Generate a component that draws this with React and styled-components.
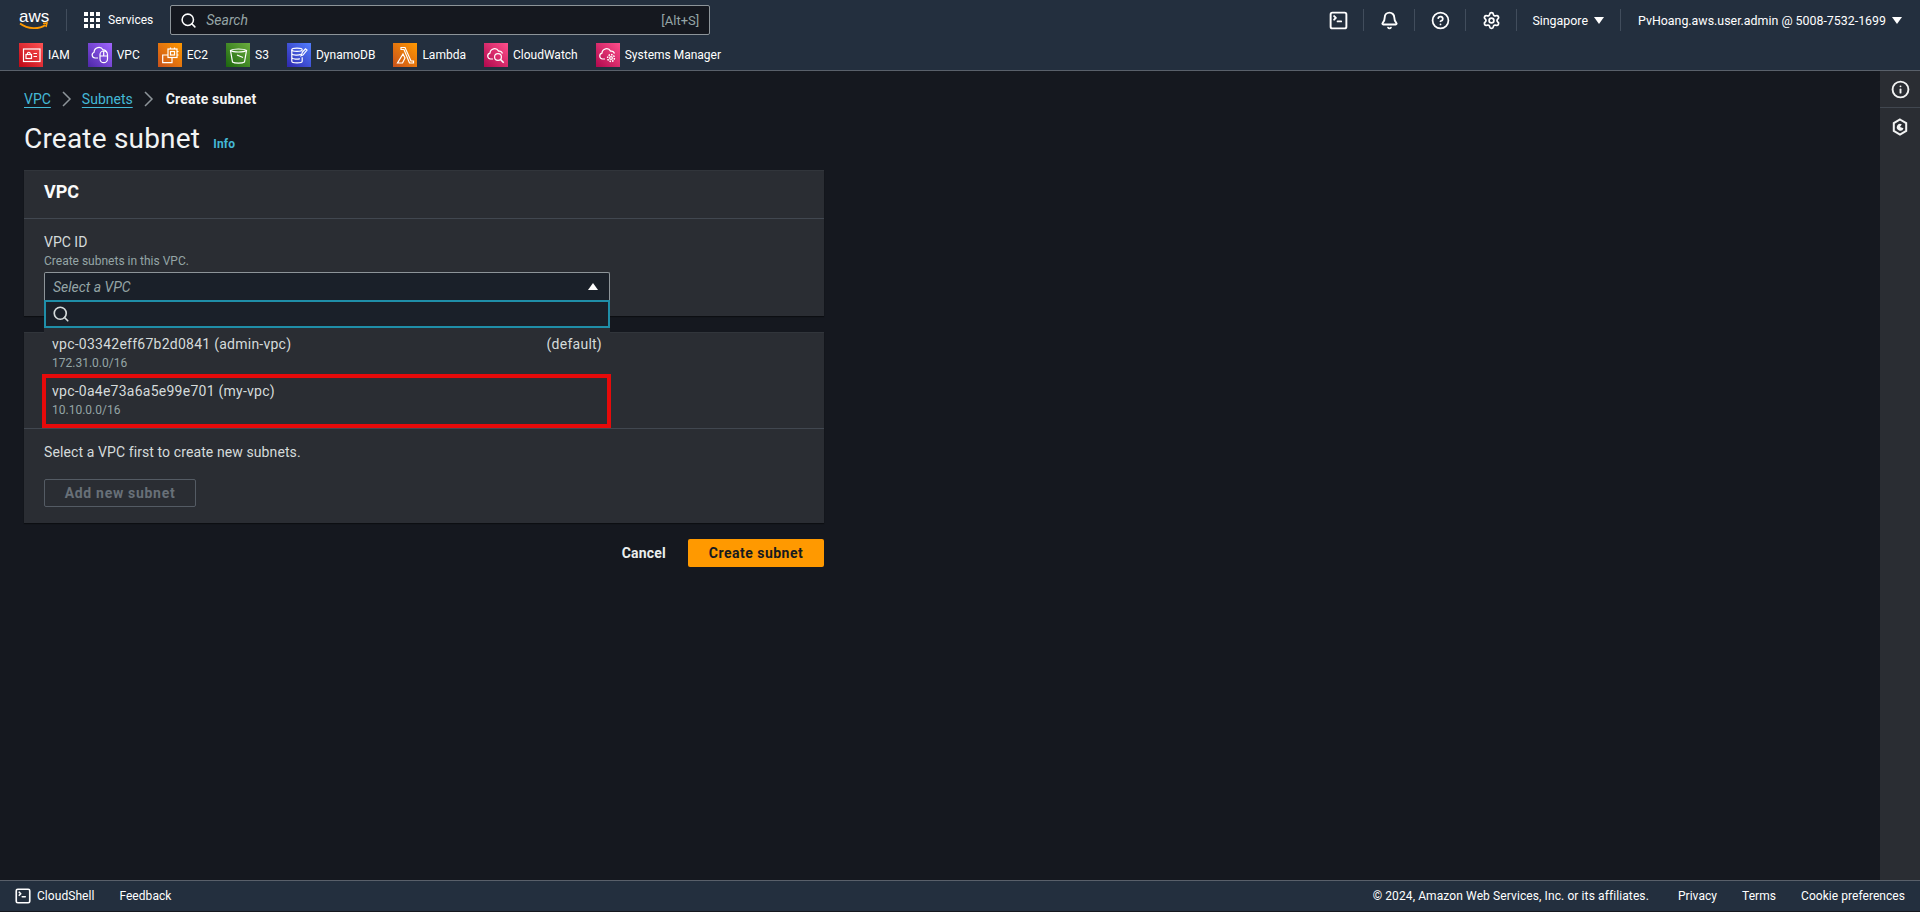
import React from 'react';
import styled, { createGlobalStyle } from 'styled-components';
import { Search, Bell, CircleHelp, Settings, SquareTerminal, Info } from 'lucide-react';

const GlobalStyle = createGlobalStyle`
  html, body {
    margin: 0;
    padding: 0;
    background: #15181f;
  }
  * {
    box-sizing: border-box;
  }
  body {
    font-family: Roboto, "Noto Sans", Arial, sans-serif;
    font-size: 14px;
    color: #d5dbdb;
  }
`;

const Page = styled.div`
  display: flex;
  flex-direction: column;
  height: 912px;
  overflow: hidden;
`;

// Top navigation
const TopNav = styled.header`
  flex: none;
  height: 71px;
  background: #232f3e;
  border-bottom: 1px solid #59606a;
  display: flex;
  flex-direction: column;
`;

const PrimaryRow = styled.div`
  height: 40px;
  display: flex;
  align-items: center;
  padding-left: 19px;
`;

const LogoWrap = styled.div`
  width: 30px;
  height: 22px;
  position: relative;
  margin-right: 17px;
  color: #fff;
  font: 400 17px/15px "Liberation Sans", Arial, sans-serif;
  text-align: center;
  svg {
    position: absolute;
    left: 0;
    bottom: 0;
  }
`;

const Divider = styled.span`
  flex: none;
  width: 1px;
  height: 22px;
  background: #414d5c;
`;

const ServicesButton = styled.div`
  display: flex;
  align-items: center;
  gap: 8px;
  margin-left: 17px;
  color: #fff;
  font-size: 12px;
`;

const SearchBox = styled.div`
  width: 540px;
  height: 30px;
  margin-left: 17px;
  padding: 0 10px 0 9px;
  background: #15181f;
  border: 1px solid #8d9499;
  border-radius: 2px;
  display: flex;
  align-items: center;
  gap: 9px;
  color: #fff;
  font-size: 14px;
`;

const SearchHint = styled.span`
  color: #95a5a6;
  font-style: italic;
  flex: 1;
`;

const ShortcutHint = styled.span`
  color: #95a5a6;
  font-size: 13px;
`;

const NavRight = styled.div`
  margin-left: auto;
  display: flex;
  align-items: center;
  color: #fff;
  font-size: 12.4px;
`;

const NavIcon = styled.div`
  width: 50px;
  height: 40px;
  display: flex;
  align-items: center;
  justify-content: center;
`;

const NavMenu = styled.div`
  display: flex;
  align-items: center;
  gap: 6px;
  padding: 0 ${(p) => p.$right}px 0 ${(p) => p.$left}px;
  white-space: nowrap;
`;

const Caret = styled.span`
  width: 0;
  height: 0;
  border-left: 5px solid transparent;
  border-right: 5px solid transparent;
  border-top: ${(p) => (p.$up ? 'none' : '7px solid #fff')};
  border-bottom: ${(p) => (p.$up ? '7px solid #fff' : 'none')};
`;

const SelectCaret = styled(Caret)`
  margin: 0 3px 2px 0;
`;

const ShortcutRow = styled.div`
  height: 30px;
  display: flex;
  align-items: flex-start;
  gap: 18px;
  padding: 3px 0 0 19px;
`;

const Shortcut = styled.div`
  display: flex;
  align-items: center;
  gap: 5px;
  color: #fff;
  font-size: 12px;
  line-height: 24px;
  white-space: nowrap;
`;

const ServiceTile = styled.span`
  flex: none;
  width: 24px;
  height: 24px;
  display: flex;
  background: linear-gradient(45deg, ${(p) => p.$from}, ${(p) => p.$to});
  svg {
    width: 24px;
    height: 24px;
    fill: none;
    stroke: #fff;
    stroke-width: 1.2;
  }
`;

// Body
const Middle = styled.div`
  flex: 1;
  display: flex;
  min-height: 0;
`;

const Main = styled.main`
  flex: 1;
  padding: 17px 0 0 24px;
`;

const Breadcrumbs = styled.nav`
  height: 22px;
  display: flex;
  align-items: center;
  gap: 5px;
`;

const CrumbLink = styled.a`
  color: #44b9d6;
  text-decoration: underline;
  text-underline-offset: 3px;
  font-size: 14px;
`;

const CrumbCurrent = styled.span`
  margin-left: 2px;
  color: #f2f3f3;
  font-size: 14px;
  font-weight: 700;
  letter-spacing: 0.2px;
`;

const TitleRow = styled.div`
  display: flex;
  align-items: baseline;
  gap: 13px;
  margin: 10px 0 12px;
  height: 38px;
`;

const PageTitle = styled.h1`
  margin: 0;
  color: #f2f3f3;
  font-size: 28px;
  line-height: 38px;
  font-weight: 400;
  letter-spacing: 0.2px;
`;

const InfoLink = styled.a`
  color: #44b9d6;
  font-size: 12px;
  font-weight: 700;
  letter-spacing: 0.2px;
`;

const Content = styled.div`
  width: 800px;
`;

const Panel = styled.section`
  background: #2a2d33;
  margin-bottom: 16px;
  box-shadow: 0 1px 1px #0006;
  border-top: 1px solid #31353b;
`;

const PanelHeader = styled.div`
  height: ${(p) => p.$height}px;
  padding: 0 20px 6px;
  display: flex;
  align-items: center;
  border-bottom: 1px solid #414750;
  color: #fafafa;
  font-size: 18px;
  font-weight: 700;
`;

const PanelBody = styled.div`
  padding: ${(p) => p.$pad};
`;

const FieldLabel = styled.label`
  display: block;
  color: #d5dbdb;
  font-size: 14px;
  line-height: 20px;
`;

const FieldHint = styled.div`
  color: #95a5a6;
  font-size: 12px;
  line-height: 18px;
  margin-bottom: 2px;
`;

const SelectWrap = styled.div`
  position: relative;
  width: 566px;
`;

const SelectTrigger = styled.div`
  height: 29px;
  padding: 0 8px;
  display: flex;
  align-items: center;
  justify-content: space-between;
  background: #1a2029;
  border: 1px solid #8d9499;
  border-bottom: none;
  border-radius: 2px 2px 0 0;
  color: #95a5a6;
  font-style: italic;
`;

const Dropdown = styled.div`
  position: absolute;
  top: 28px;
  left: 0;
  right: 0;
  z-index: 5;
  background: #2a2d33;
`;

const DropdownSearch = styled.div`
  height: 28px;
  padding: 0 6px;
  display: flex;
  align-items: center;
  background: #1a2029;
  border: 2px solid #1f8ea8;
  color: #d5dbdb;
`;

const Option = styled.div`
  height: ${(p) => p.$height}px;
  padding: ${(p) => p.$top}px 8px 0;
  display: flex;
  justify-content: space-between;
  position: relative;
`;

const OptionText = styled.div`
  color: #d5dbdb;
  font-size: 14px;
  line-height: 20px;
  letter-spacing: 0.25px;
`;

const OptionSub = styled.div`
  color: #95a5a6;
  font-size: 12px;
  line-height: 18px;
`;

const Highlight = styled.div`
  position: absolute;
  inset: 0 -1px 0 -2px;
  border: 4px solid #e60a0a;
`;

const EmptyText = styled.p`
  margin: 0 0 17px;
  color: #d5dbdb;
  font-size: 14px;
  line-height: 20px;
  letter-spacing: 0.1px;
`;

const DisabledButton = styled.div`
  width: 152px;
  height: 28px;
  display: flex;
  align-items: center;
  justify-content: center;
  border: 1px solid #545b64;
  border-radius: 2px;
  color: #687078;
  font-size: 14px;
  font-weight: 700;
  letter-spacing: 0.7px;
`;

const Actions = styled.div`
  display: flex;
  justify-content: flex-end;
  align-items: center;
  gap: 22px;
`;

const CancelButton = styled.span`
  color: #eaeded;
  font-size: 14px;
  font-weight: 700;
  letter-spacing: 0.2px;
`;

const PrimaryButton = styled.div`
  width: 136px;
  height: 28px;
  display: flex;
  align-items: center;
  justify-content: center;
  background: #ff9900;
  border-radius: 2px;
  color: #16191f;
  font-size: 14px;
  font-weight: 700;
  letter-spacing: 0.5px;
`;

const Rail = styled.aside`
  flex: none;
  width: 40px;
  background: #2a2d33;
  color: #f2f3f3;
`;

const RailButton = styled.div`
  height: 37px;
  display: flex;
  align-items: center;
  justify-content: center;
  border-bottom: ${(p) => (p.$line ? '1px solid #414750' : 'none')};
`;

// Footer
const Footer = styled.footer`
  flex: none;
  height: 32px;
  padding: 0 15px 0 14px;
  display: flex;
  align-items: center;
  background: #232f3e;
  border-top: 1px solid #59606a;
  border-bottom: 1px solid #15181f;
  color: #fff;
  font-size: 12px;
  letter-spacing: 0.05px;
`;

const FooterLeft = styled.div`
  display: flex;
  align-items: center;
  gap: 5px;
`;

const FeedbackLink = styled.span`
  margin-left: 20px;
`;

const FooterRight = styled.div`
  margin-left: auto;
  display: flex;
  gap: 25px;
`;

const Copyright = styled.span`
  margin-right: 4px;
  letter-spacing: 0.1px;
`;

const AwsLogo = () => (
  <LogoWrap>
    aws
    <svg width="30" height="9" viewBox="0 0 30 9">
      <path d="M1 1.5C9 7.5 20 7.5 26.5 3" fill="none" stroke="#ff9900" strokeWidth="1.8" />
      <path d="M24 1.5l4-.5-1 4" fill="none" stroke="#ff9900" strokeWidth="1.5" />
    </svg>
  </LogoWrap>
);

const GridIcon = () => (
  <svg width="16" height="16" viewBox="0 0 16 16" fill="#fff">
    {[0, 6, 12].flatMap((y) =>
      [0, 6, 12].map((x) => <rect key={`${x}-${y}`} x={x} y={y} width="4" height="4" />)
    )}
  </svg>
);

const HexIcon = () => (
  <svg width="16" height="18" viewBox="0 0 16 18" fill="none" stroke="currentColor" strokeWidth="2">
    <path d="M8 1.5l6.2 3.6v7.8L8 16.5l-6.200-3.600V5.100z" />
    <path d="M11.500 10.200A3.400 3.400 0 1 1 9.800 6.200L8 9z" fill="currentColor" stroke="none" />
  </svg>
);

const BreadcrumbChevron = () => (
  <svg width="21" height="18" viewBox="0 0 21 18" fill="none" stroke="#8d9499" strokeWidth="1.5">
    <path d="M7 2l7 7-7 7" />
  </svg>
);

const shortcuts = [
  {
    label: 'IAM', from: '#bd0816', to: '#ff5252',
    art: (
      <>
        <rect x="4.500" y="6" width="16.500" height="12.500" />
        <rect x="7" y="11.500" width="5.500" height="4" />
        <path d="M8.300 11.500c0-3 3-3 3 0M14.500 10.500h3.500M14.500 13.500h3.500" />
      </>
    ),
  },
  {
    label: 'VPC', from: '#4d27a8', to: '#a166ff',
    art: (
      <>
        <path d="M10 15H7a3 3 0 0 1-.9-5.800 4.800 4.800 0 0 1 9-2.200 3.400 3.400 0 0 1 3.900 3" />
        <rect x="12" y="8" width="7.500" height="11.700" rx="3.700" />
        <path d="M15.700 8v5M12 13h7.500" />
      </>
    ),
  },
  {
    label: 'EC2', from: '#c8511b', to: '#ff9900',
    art: (
      <>
        <rect x="10" y="6" width="9" height="8.500" />
        <rect x="12.500" y="8.500" width="4" height="3.500" />
        <path d="M10 12H4.700v7.700H14v-5.200M12.500 6V4.500M16.500 6V4.500M19 8.500h1.500M19 12h1.500" />
      </>
    ),
  },
  {
    label: 'S3', from: '#1b660f', to: '#6cae3e',
    art: (
      <>
        <path d="M4.500 7.500C7 5.500 18 5.500 20.500 7.500L18.500 19c-2 1.500-10 1.500-12 0z" />
        <path d="M4.500 7.500c3 2 13 2 16 0M11 12l6 2.500" />
      </>
    ),
  },
  {
    label: 'DynamoDB', from: '#2e27ad', to: '#527fff',
    art: (
      <>
        <ellipse cx="10" cy="6.800" rx="5.200" ry="1.600" />
        <path d="M4.800 6.800v11.400c0 2.200 10.400 2.200 10.400 0v-4M4.800 10.800c1 1.600 7 1.800 9 .5M4.800 14.800c1 1.600 6 1.800 8 .8M15.500 9l3-3.200 1.500 1.300-4 5-2 .6z" />
      </>
    ),
  },
  {
    label: 'Lambda', from: '#c8511b', to: '#ff9900',
    art: <path d="M8 4.500h4l6 13.500h2.500v2h-4L11 6.500H8zM10 11l2 4-2.500 5H4.500z" />,
  },
  {
    label: 'CloudWatch', from: '#b0084d', to: '#ff4f8b',
    art: (
      <>
        <path d="M9 16H6.500a3 3 0 0 1-.5-5.900 4.600 4.600 0 0 1 8.600-2 3.500 3.500 0 0 1 3.900 2.400" />
        <circle cx="14" cy="14" r="3.400" />
        <path d="M16.500 16.500l3.200 3.200" strokeWidth="1.600" />
      </>
    ),
  },
  {
    label: 'Systems Manager', from: '#b0084d', to: '#ff4f8b',
    art: (
      <>
        <path d="M9 16H6.500a3 3 0 0 1-.5-5.900 4.600 4.600 0 0 1 8.600-2 3.500 3.500 0 0 1 3.900 2.400" />
        <circle cx="15" cy="15" r="1.400" />
        <circle cx="15" cy="15" r="3.400" strokeDasharray="1.600 1" strokeWidth="1.500" />
      </>
    ),
  },
];

const App = () => (
  <Page>
    <GlobalStyle />
    <TopNav>
      <PrimaryRow>
        <AwsLogo />
        <Divider />
        <ServicesButton>
          <GridIcon />
          Services
        </ServicesButton>
        <SearchBox>
          <Search size={17} strokeWidth={2.2} />
          <SearchHint>Search</SearchHint>
          <ShortcutHint>[Alt+S]</ShortcutHint>
        </SearchBox>
        <NavRight>
          <NavIcon><SquareTerminal size={21} strokeWidth={2.2} /></NavIcon>
          <Divider />
          <NavIcon><Bell size={19} strokeWidth={2.4} /></NavIcon>
          <Divider />
          <NavIcon><CircleHelp size={19} strokeWidth={2.2} /></NavIcon>
          <Divider />
          <NavIcon><Settings size={19} strokeWidth={2.2} /></NavIcon>
          <Divider />
          <NavMenu $left={15} $right={16}>Singapore <Caret /></NavMenu>
          <Divider />
          <NavMenu $left={17} $right={18}>PvHoang.aws.user.admin @ 5008-7532-1699 <Caret /></NavMenu>
        </NavRight>
      </PrimaryRow>
      <ShortcutRow>
        {shortcuts.map((s) => (
          <Shortcut key={s.label}>
            <ServiceTile $from={s.from} $to={s.to}>
              <svg viewBox="0 0 24 24">{s.art}</svg>
            </ServiceTile>
            {s.label}
          </Shortcut>
        ))}
      </ShortcutRow>
    </TopNav>

    <Middle>
      <Main>
        <Breadcrumbs>
          <CrumbLink>VPC</CrumbLink>
          <BreadcrumbChevron />
          <CrumbLink>Subnets</CrumbLink>
          <BreadcrumbChevron />
          <CrumbCurrent>Create subnet</CrumbCurrent>
        </Breadcrumbs>
        <TitleRow>
          <PageTitle>Create subnet</PageTitle>
          <InfoLink>Info</InfoLink>
        </TitleRow>
        <Content>
          <Panel>
            <PanelHeader $height={48}>VPC</PanelHeader>
            <PanelBody $pad="13px 20px 15px">
              <FieldLabel>VPC ID</FieldLabel>
              <FieldHint>Create subnets in this VPC.</FieldHint>
              <SelectWrap>
                <SelectTrigger>
                  Select a VPC
                  <SelectCaret $up />
                </SelectTrigger>
                <Dropdown>
                  <DropdownSearch>
                    <Search size={18} strokeWidth={2.2} />
                  </DropdownSearch>
                  <Option $height={46} $top={6}>
                    <div>
                      <OptionText>vpc-03342eff67b2d0841 (admin-vpc)</OptionText>
                      <OptionSub>172.31.0.0/16</OptionSub>
                    </div>
                    <OptionText>(default)</OptionText>
                  </Option>
                  <Option $height={54} $top={7}>
                    <Highlight />
                    <div>
                      <OptionText>vpc-0a4e73a6a5e99e701 (my-vpc)</OptionText>
                      <OptionSub>10.10.0.0/16</OptionSub>
                    </div>
                  </Option>
                </Dropdown>
              </SelectWrap>
            </PanelBody>
          </Panel>
          <Panel>
            <PanelHeader $height={96} />
            <PanelBody $pad="13px 20px 16px">
              <EmptyText>Select a VPC first to create new subnets.</EmptyText>
              <DisabledButton>Add new subnet</DisabledButton>
            </PanelBody>
          </Panel>
          <Actions>
            <CancelButton>Cancel</CancelButton>
            <PrimaryButton>Create subnet</PrimaryButton>
          </Actions>
        </Content>
      </Main>
      <Rail>
        <RailButton $line><Info size={19} strokeWidth={2.4} /></RailButton>
        <RailButton><HexIcon /></RailButton>
      </Rail>
    </Middle>

    <Footer>
      <FooterLeft>
        <SquareTerminal size={18} strokeWidth={2.2} />
        CloudShell
        <FeedbackLink>Feedback</FeedbackLink>
      </FooterLeft>
      <FooterRight>
        <Copyright>© 2024, Amazon Web Services, Inc. or its affiliates.</Copyright>
        <span>Privacy</span>
        <span>Terms</span>
        <span>Cookie preferences</span>
      </FooterRight>
    </Footer>
  </Page>
);

export default App;
